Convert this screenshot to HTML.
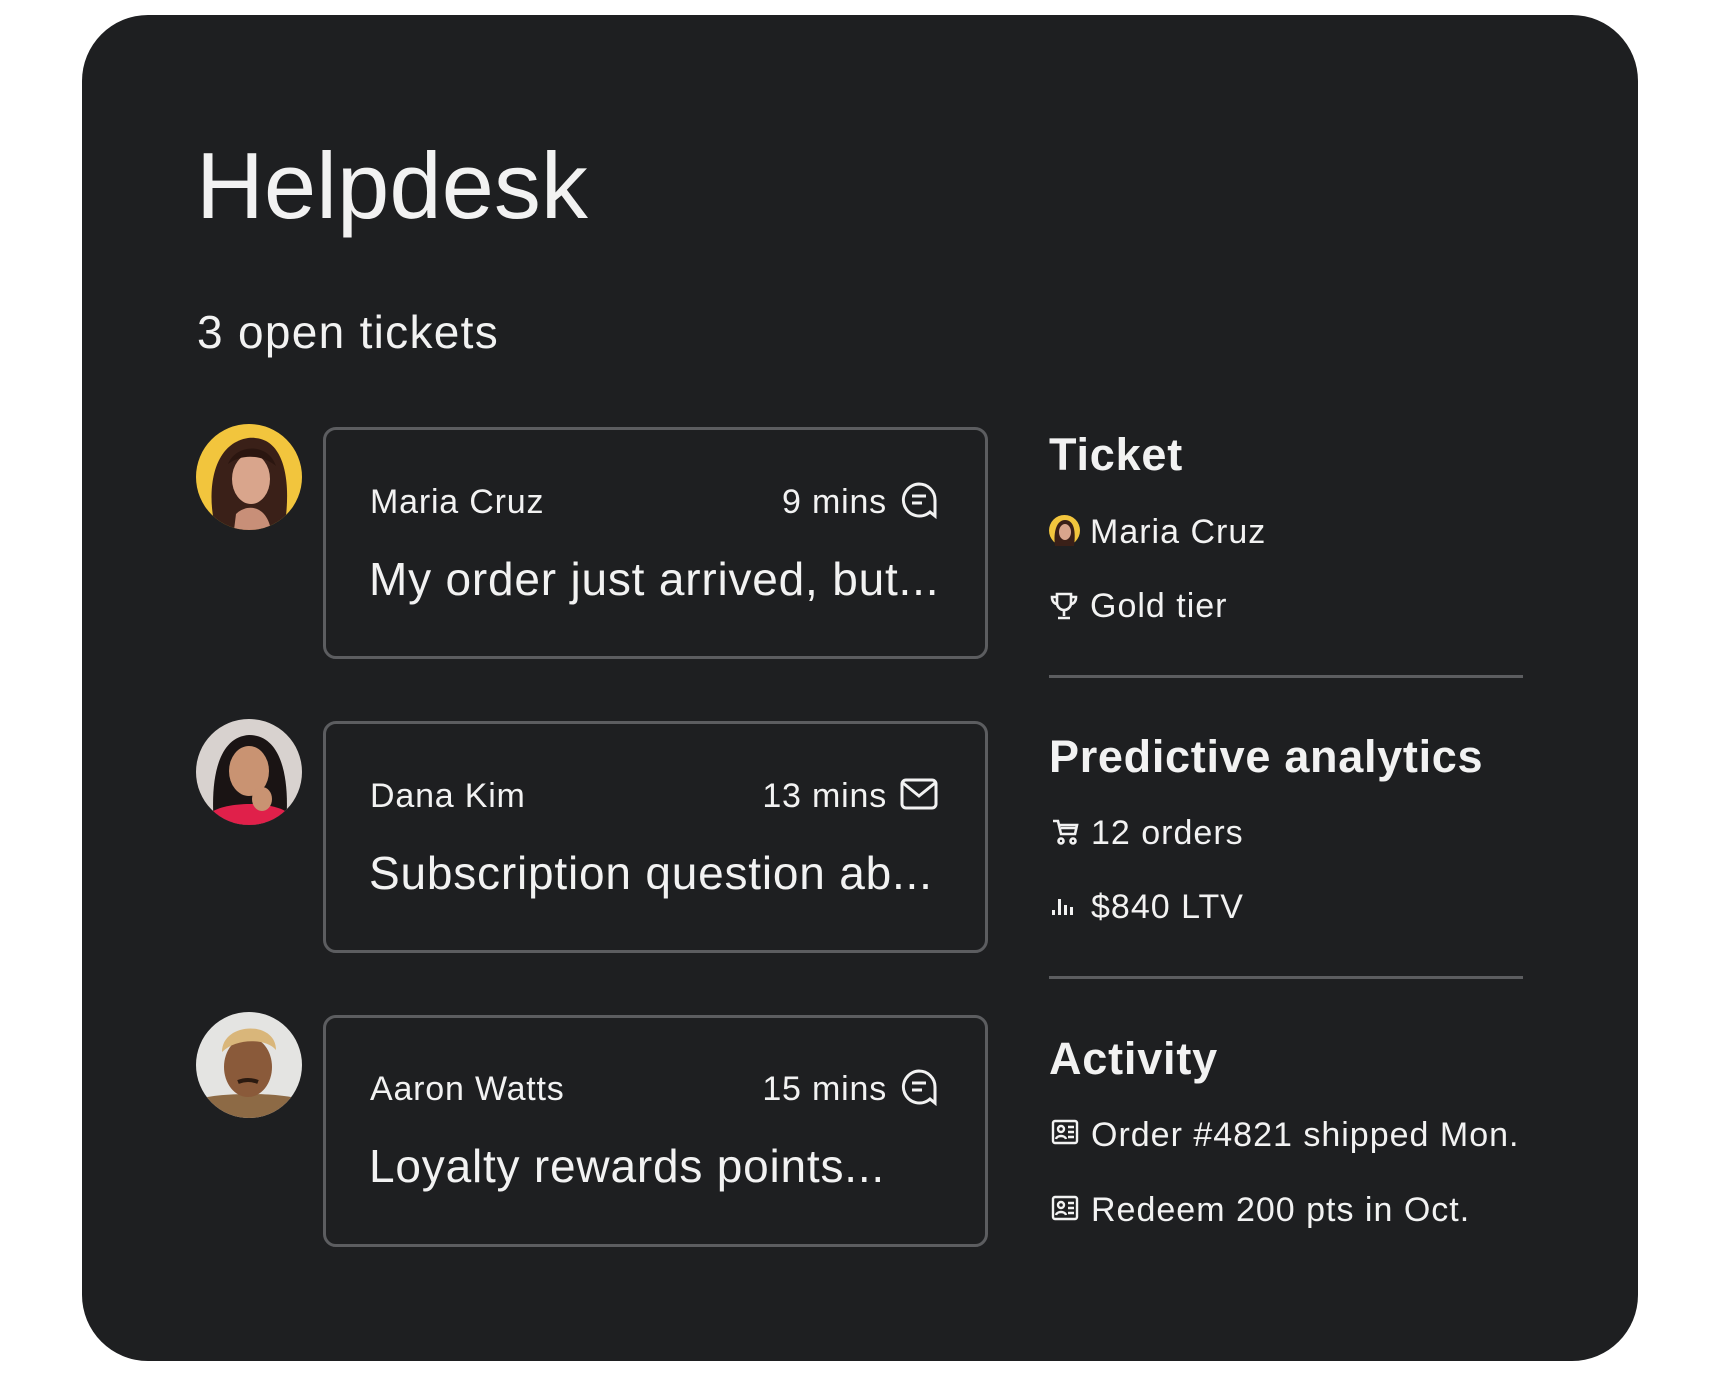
<!DOCTYPE html>
<html><head><meta charset="utf-8"><style>
*{margin:0;padding:0;box-sizing:border-box}
body{width:1721px;height:1377px;background:#fff;position:relative;overflow:hidden;font-family:"Liberation Sans",sans-serif;color:#f2f2f2}
.card{position:absolute;left:82px;top:15px;width:1556px;height:1346px;background:#1e1f21;border-radius:66px}
.t{position:absolute;white-space:nowrap;line-height:1}
.box{position:absolute;left:323px;width:665px;height:232px;border:3px solid #5c5d60;border-radius:13px}
.av{position:absolute;left:196px;width:106px;height:106px;border-radius:50%;overflow:hidden}
.hr{position:absolute;left:1049px;width:474px;height:3px;background:#5c5d60}
svg.i{position:absolute}
.nm{letter-spacing:0.8px}
.msg{letter-spacing:0.8px}
.rs{letter-spacing:1px}
</style></head><body>
<div class="card"></div>
<div class="t" style="left:196px;top:139px;font-size:94px;letter-spacing:0px">Helpdesk</div>
<div class="t" style="left:197px;top:309px;font-size:46px;letter-spacing:1.3px">3 open tickets</div>

<div class="av" style="top:424px"><svg width="106" height="106" viewBox="0 0 106 106"><rect width="106" height="106" fill="#f2c53d"/><path d="M20 106 C10 70 15 20 52 14 C90 10 96 60 88 106Z" fill="#3a2018"/><ellipse cx="55" cy="55" rx="19" ry="25" fill="#d9a58c"/><path d="M32 40 C40 20 72 18 80 42 C65 30 45 30 32 40Z" fill="#2b1610"/><path d="M40 90 C50 80 70 80 75 106 L38 106Z" fill="#c88f78"/></svg></div>
<div class="av" style="top:719px"><svg width="106" height="106" viewBox="0 0 106 106"><rect width="106" height="106" fill="#d8d2cf"/><path d="M18 106 C14 60 22 18 53 16 C86 16 94 60 90 106Z" fill="#1a1414"/><ellipse cx="53" cy="52" rx="20" ry="25" fill="#c99372"/><path d="M14 94 C30 82 78 82 92 94 L92 106 L14 106Z" fill="#e0204a"/><ellipse cx="66" cy="80" rx="10" ry="12" fill="#c99372"/></svg></div>
<div class="av" style="top:1012px"><svg width="106" height="106" viewBox="0 0 106 106"><rect width="106" height="106" fill="#e4e4e2"/><path d="M0 88 C20 80 86 80 106 88 L106 106 L0 106Z" fill="#8d6a45"/><ellipse cx="52" cy="55" rx="24" ry="30" fill="#8a5a3a"/><path d="M26 40 C26 10 80 8 80 38 C70 26 40 26 26 40Z" fill="#d9b67a"/><path d="M42 70 Q52 66 62 70" stroke="#2b1a10" stroke-width="4" fill="none"/></svg></div>

<div class="box" style="top:427px"></div>
<div class="box" style="top:721px"></div>
<div class="box" style="top:1015px"></div>

<div class="t nm" style="left:370px;top:485px;font-size:34px">Maria Cruz</div>
<div class="t nm" style="left:700px;width:187px;text-align:right;top:485px;font-size:34px">9 mins</div>
<svg class="i" style="left:900px;top:481px" width="38" height="38" viewBox="0 0 38 38" fill="none" stroke="#f2f2f2" stroke-width="3"><path d="M19 3 A16 16 0 1 0 30 31 L35 35 L35 19 A16 16 0 0 0 19 3Z"/><path d="M12 15h14M12 22h10"/></svg>
<div class="t msg" style="left:369px;top:556px;font-size:46px">My order just arrived, but...</div>

<div class="t nm" style="left:370px;top:779px;font-size:34px">Dana Kim</div>
<div class="t nm" style="left:700px;width:187px;text-align:right;top:779px;font-size:34px">13 mins</div>
<svg class="i" style="left:900px;top:778px" width="38" height="32" viewBox="0 0 38 32" fill="none" stroke="#f2f2f2" stroke-width="3"><rect x="2" y="2" width="34" height="28" rx="4"/><path d="M3 5l16 13 16-13"/></svg>
<div class="t msg" style="left:369px;top:850px;font-size:46px">Subscription question ab...</div>

<div class="t nm" style="left:370px;top:1072px;font-size:34px">Aaron Watts</div>
<div class="t nm" style="left:700px;width:187px;text-align:right;top:1072px;font-size:34px">15 mins</div>
<svg class="i" style="left:900px;top:1068px" width="38" height="38" viewBox="0 0 38 38" fill="none" stroke="#f2f2f2" stroke-width="3"><path d="M19 3 A16 16 0 1 0 30 31 L35 35 L35 19 A16 16 0 0 0 19 3Z"/><path d="M12 15h14M12 22h10"/></svg>
<div class="t msg" style="left:369px;top:1143px;font-size:46px">Loyalty rewards points...</div>

<div class="t" style="left:1049px;top:432px;font-size:45px;font-weight:bold;letter-spacing:0.8px">Ticket</div>
<svg class="i" style="left:1049px;top:515px" width="31" height="31" viewBox="0 0 31 31"><circle cx="15.5" cy="15.5" r="15.5" fill="#f2c53d"/><path d="M6 31 C4 16 8 5 16 5 C25 5 27 16 25 31Z" fill="#3a2018"/><ellipse cx="16" cy="17" rx="6" ry="8" fill="#d9a58c"/></svg>
<div class="t rs" style="left:1090px;top:515px;font-size:34px">Maria Cruz</div>
<svg class="i" style="left:1049px;top:591px" width="30" height="30" viewBox="0 0 30 30" fill="none" stroke="#f2f2f2" stroke-width="2.6"><path d="M8 3h14v9a7 7 0 0 1-14 0z"/><path d="M8 6H3c0 5 3 7 5 7M22 6h5c0 5-3 7-5 7M15 19v6M9 27h12"/></svg>
<div class="t rs" style="left:1090px;top:589px;font-size:34px">Gold tier</div>
<div class="hr" style="top:675px"></div>

<div class="t" style="left:1049px;top:734px;font-size:45px;font-weight:bold;letter-spacing:0.7px">Predictive analytics</div>
<svg class="i" style="left:1051px;top:818px" width="28" height="28" viewBox="0 0 28 28" fill="none" stroke="#f2f2f2" stroke-width="2.6"><path d="M2 3h5l3 13h14l2-9H8M10 10h15"/><circle cx="10" cy="23" r="2.5"/><circle cx="22" cy="23" r="2.5"/></svg>
<div class="t rs" style="left:1091px;top:816px;font-size:34px">12 orders</div>
<svg class="i" style="left:1052px;top:896px" width="24" height="20" viewBox="0 0 24 20" fill="#f2f2f2"><rect x="0" y="14" width="3" height="5"/><rect x="6" y="3" width="3" height="16"/><rect x="12" y="9" width="3" height="10"/><rect x="18" y="11" width="3" height="8"/></svg>
<div class="t rs" style="left:1091px;top:890px;font-size:34px">$840 LTV</div>
<div class="hr" style="top:976px"></div>

<div class="t" style="left:1049px;top:1036px;font-size:45px;font-weight:bold;letter-spacing:0.8px">Activity</div>
<svg class="i" style="left:1051px;top:1119px" width="28" height="26" viewBox="0 0 28 26" fill="none" stroke="#f2f2f2" stroke-width="2.4"><rect x="2" y="2" width="24" height="22" rx="2"/><circle cx="10" cy="10" r="3"/><path d="M5 20c1-4 9-4 10 0M17 8h6M17 13h6M17 18h6"/></svg>
<div class="t rs" style="left:1091px;top:1118px;font-size:34px">Order #4821 shipped Mon.</div>
<svg class="i" style="left:1051px;top:1195px" width="28" height="26" viewBox="0 0 28 26" fill="none" stroke="#f2f2f2" stroke-width="2.4"><rect x="2" y="2" width="24" height="22" rx="2"/><circle cx="10" cy="10" r="3"/><path d="M5 20c1-4 9-4 10 0M17 8h6M17 13h6M17 18h6"/></svg>
<div class="t rs" style="left:1091px;top:1193px;font-size:34px">Redeem 200 pts in Oct.</div>
</body></html>
